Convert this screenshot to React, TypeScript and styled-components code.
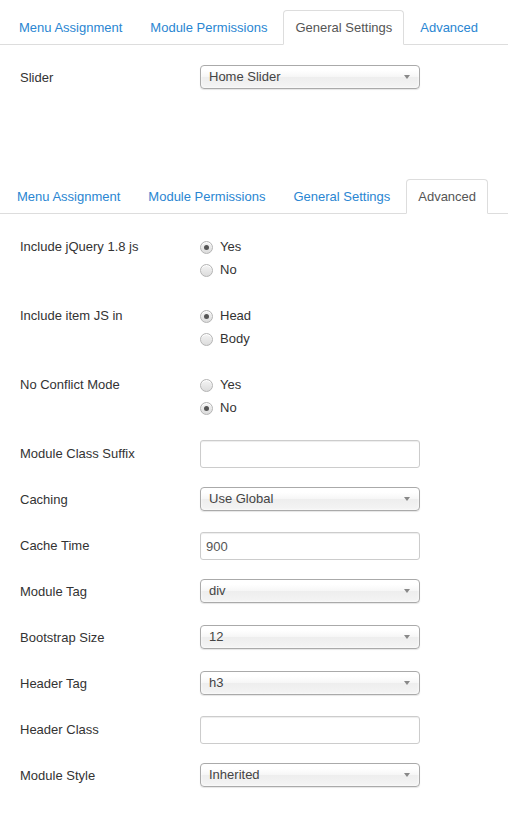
import * as React from 'react'
import styled, { createGlobalStyle } from 'styled-components'

const GlobalStyle = createGlobalStyle`
	body {
		margin: 0;
		background: #fff;
		font-family: "Liberation Sans", Arial, Helvetica, sans-serif;
		font-size: 13px;
		color: #333;
	}
`

const Page = styled.div`
	width: 508px;
	padding-top: 10px;
`

interface TabBarProps {
	$indent: number
}
const TabBar = styled.ul<TabBarProps>`
	display: flex;
	gap: 4px;
	list-style: none;
	margin: 0;
	padding: 0 0 0 ${({ $indent }) => $indent + 'px'};
	border-bottom: 1px solid #ddd;
`

interface TabProps {
	$active?: boolean
}
const Tab = styled.li<TabProps>`
	padding: 8px 11px 7px;
	line-height: 18px;
	border: 1px solid ${({ $active }) => $active ? '#ddd' : 'transparent'};
	border-bottom-color: ${({ $active }) => $active ? '#fff' : 'transparent'};
	border-radius: 4px 4px 0 0;
	margin-bottom: -1px;
	background: ${({ $active }) => $active ? '#fff' : 'transparent'};
	color: ${({ $active }) => $active ? '#555' : '#2a86d2'};
	cursor: pointer;
	white-space: nowrap;
`

interface PaneProps {
	$top: number
	$minHeight?: number
}
const Pane = styled.div<PaneProps>`
	box-sizing: border-box;
	padding: ${({ $top }) => $top + 'px'} 0 0 20px;
	min-height: ${({ $minHeight }) => $minHeight ? $minHeight + 'px' : 'auto'};
`

const ControlGroup = styled.div`
	display: flex;
	align-items: flex-start;
	margin-bottom: 18px;
	min-height: 28px;
`

const ControlLabel = styled.label`
	width: 180px;
	flex: none;
	padding-top: 5px;
	line-height: 18px;
	color: #333;
`

const Controls = styled.div`
	flex: 1;
`

const RadioList = styled.fieldset`
	display: flex;
	flex-direction: column;
	gap: 5px;
	margin: 0;
	border: 0;
	padding: 5px 0 5px;
`

const RadioItem = styled.label`
	display: flex;
	align-items: center;
	line-height: 18px;
	color: #333;
`

interface RadioDotProps {
	$checked?: boolean
}
const RadioDot = styled.span<RadioDotProps>`
	position: relative;
	box-sizing: border-box;
	width: 13px;
	height: 13px;
	margin-right: 7px;
	border-radius: 50%;
	border: 1px solid #b4b4b4;
	background: linear-gradient(#f4f4f4, #dcdcdc);
	box-shadow: inset 0 1px 0 #fff;
	&::after {
		content: '';
		display: ${({ $checked }) => $checked ? 'block' : 'none'};
		position: absolute;
		left: 3px;
		top: 3px;
		width: 5px;
		height: 5px;
		border-radius: 50%;
		background: #555;
	}
`

const TextInput = styled.input`
	box-sizing: border-box;
	width: 220px;
	height: 28px;
	padding: 4px 5px;
	border: 1px solid #ccc;
	border-radius: 3px;
	box-shadow: inset 0 1px 1px rgba(0, 0, 0, 0.075);
	font-family: inherit;
	font-size: 13px;
	color: #555;
	outline: none;
`

const Chosen = styled.div`
	position: relative;
	box-sizing: border-box;
	width: 220px;
	height: 24px;
	margin-top: 1px;
	padding: 0 0 0 8px;
	border: 1px solid #aaa;
	border-radius: 4px;
	background: linear-gradient(#fff 20%, #f6f6f6 50%, #eee 52%, #f4f4f4 100%);
	box-shadow: inset 0 0 3px #fff, 0 1px 1px rgba(0, 0, 0, 0.1);
	line-height: 22px;
	color: #444;
	&::after {
		content: '';
		position: absolute;
		right: 9px;
		top: 9px;
		border-left: 3px solid transparent;
		border-right: 3px solid transparent;
		border-top: 4px solid #888;
	}
`

const tabNames = ['Menu Assignment', 'Module Permissions', 'General Settings', 'Advanced']

const Tabs: React.FC<{ active: number; indent: number }> = ({ active, indent }) => (
	<TabBar $indent={indent}>
		{tabNames.map((name, i) => (
			<Tab key={name} $active={i === active}>{name}</Tab>
		))}
	</TabBar>
)

const RadioField: React.FC<{ label: string; options: string[]; value: string }> = ({ label, options, value }) => (
	<ControlGroup>
		<ControlLabel>{label}</ControlLabel>
		<Controls>
			<RadioList>
				{options.map(opt => (
					<RadioItem key={opt}>
						<RadioDot $checked={opt === value} />
						{opt}
					</RadioItem>
				))}
			</RadioList>
		</Controls>
	</ControlGroup>
)

const SelectField: React.FC<{ label: string; value: string }> = ({ label, value }) => (
	<ControlGroup>
		<ControlLabel>{label}</ControlLabel>
		<Controls>
			<Chosen>{value}</Chosen>
		</Controls>
	</ControlGroup>
)

const TextField: React.FC<{ label: string; value?: string }> = ({ label, value }) => (
	<ControlGroup>
		<ControlLabel>{label}</ControlLabel>
		<Controls>
			<TextInput type="text" defaultValue={value || ''} />
		</Controls>
	</ControlGroup>
)

export default function App() {
	return (
		<Page>
			<GlobalStyle />
			<Tabs active={2} indent={7} />
			<Pane $top={19} $minHeight={134}>
				<SelectField label="Slider" value="Home Slider" />
			</Pane>

			<Tabs active={3} indent={5} />
			<Pane $top={19}>
				<RadioField label="Include jQuery 1.8 js" options={['Yes', 'No']} value="Yes" />
				<RadioField label="Include item JS in" options={['Head', 'Body']} value="Head" />
				<RadioField label="No Conflict Mode" options={['Yes', 'No']} value="No" />
				<TextField label="Module Class Suffix" />
				<SelectField label="Caching" value="Use Global" />
				<TextField label="Cache Time" value="900" />
				<SelectField label="Module Tag" value="div" />
				<SelectField label="Bootstrap Size" value="12" />
				<SelectField label="Header Tag" value="h3" />
				<TextField label="Header Class" />
				<SelectField label="Module Style" value="Inherited" />
			</Pane>
		</Page>
	)
}
